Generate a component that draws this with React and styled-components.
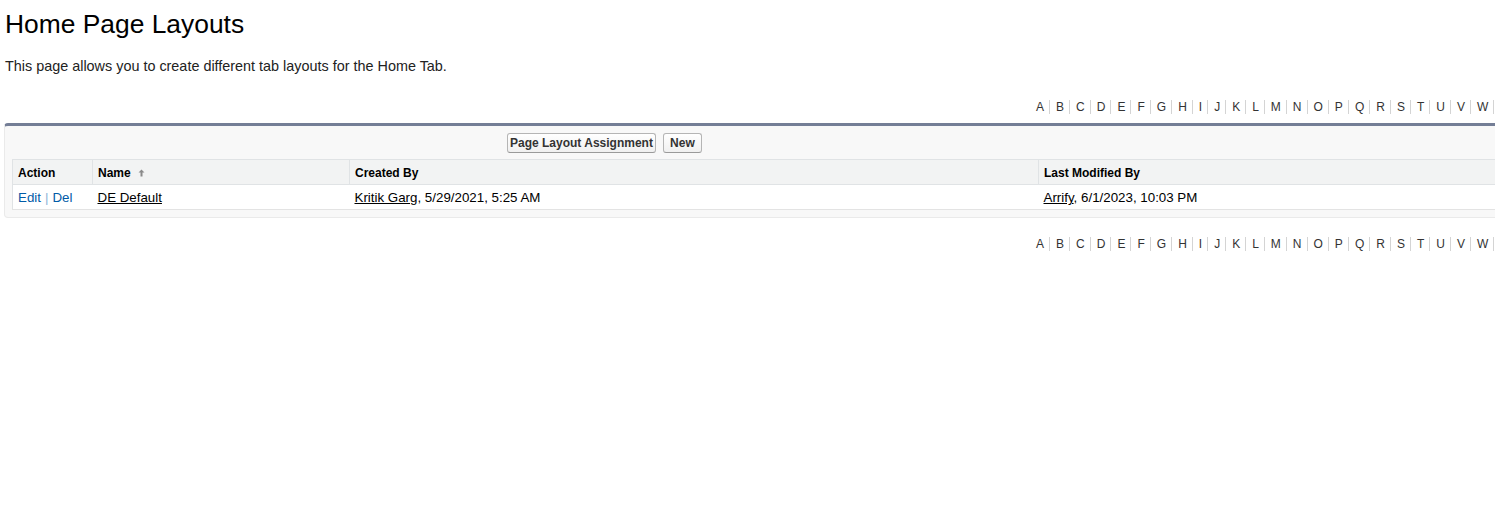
import React from 'react';
import styled, { createGlobalStyle } from 'styled-components';

const GlobalStyle = createGlobalStyle`
  html, body {
    margin: 0;
    padding: 0;
    overflow: hidden;
    background: #fff;
  }
  body {
    font-family: "Liberation Sans", Arial, sans-serif;
    color: #000;
  }
`;

const Page = styled.div`
  width: 1618px;
  padding: 9px 0 0 4px;
`;

const Title = styled.h1`
  margin: 0 0 0 1px;
  font-size: 26.4px;
  line-height: 31px;
  font-weight: normal;
  color: #000;
`;

const Description = styled.p`
  margin: 18px 0 0 1px;
  font-size: 14.4px;
  line-height: 17px;
  color: #222;
`;

const Rolodex = styled.div`
  display: flex;
  justify-content: flex-end;
  margin-top: ${(p) => p.$top}px;
  font-size: 12px;
  line-height: 14px;
`;

const Letter = styled.a`
  padding: 0 5px 0 6px;
  color: ${(p) => (p.$current ? '#000' : '#333')};
  font-weight: ${(p) => (p.$current ? 'bold' : 'normal')};
  text-decoration: none;
  & + & {
    border-left: 1px solid #d4d4d4;
  }
`;

const Panel = styled.div`
  margin-top: 9px;
  background: #f8f8f8;
  border: 1px solid #eaeaea;
  border-top: 3px solid #747e96;
  border-radius: 4px;
  padding: 7px 0 7px 7px;
`;

const PanelHeader = styled.div`
  display: flex;
  align-items: center;
`;

const PanelTitle = styled.div`
  width: 495px;
  flex-shrink: 0;
`;

const Buttons = styled.div`
  display: flex;
  gap: 7px;
`;

const Button = styled.button`
  box-sizing: border-box;
  min-width: 39px;
  font-family: "Liberation Sans", Arial, sans-serif;
  font-size: 12px;
  line-height: 14px;
  font-weight: bold;
  color: #333;
  padding: 2px 2px;
  background: linear-gradient(#ffffff, #f0f0f0);
  border: 1px solid #b5b5b5;
  border-bottom-color: #9a9a9a;
  border-radius: 3px;
  cursor: pointer;
`;

const Table = styled.table`
  margin-top: 6px;
  border-collapse: collapse;
  width: 1596px;
  background: #fff;
  border: 1px solid #e0e3e5;
  table-layout: fixed;
`;

const HeadCell = styled.th`
  box-sizing: border-box;
  width: ${(p) => p.$w || 'auto'};
  text-align: left;
  font-size: 12px;
  line-height: 14px;
  font-weight: bold;
  color: #000;
  background: #f2f3f3;
  padding: 6px 2px 4px 5px;
  border: 1px solid #e0e3e5;
  white-space: nowrap;
`;

const Cell = styled.td`
  font-size: 13.33px;
  line-height: 16px;
  color: #000;
  padding: 5px 2px 3px 5px;
  border-bottom: 1px solid #e3e3e3;
  white-space: nowrap;
`;

const ActionLink = styled.a`
  color: #015ba7;
  text-decoration: none;
`;

const Pipe = styled.span`
  color: #8eb5d8;
  margin: 0 4px;
`;

const UserLink = styled.a`
  color: #000;
  text-decoration: underline;
`;

const SortArrow = () => (
  <svg width="7" height="8" viewBox="0 0 7 8" style={{ marginLeft: 7, verticalAlign: '0px' }}>
    <path d="M3.5 0.5 L6.5 3.5 L4.5 3.5 L4.5 7.5 L2.5 7.5 L2.5 3.5 L0.5 3.5 Z" fill="#8a8a8a" />
  </svg>
);

const letters = 'A B C D E F G H I J K L M N O P Q R S T U V W X Y Z Other All'.split(' ');

const LetterBar = ({ top }) => (
  <Rolodex $top={top}>
    {letters.map((l) => (
      <Letter key={l} $current={l === 'All'}>{l}</Letter>
    ))}
  </Rolodex>
);

const App = () => (
  <>
    <GlobalStyle />
    <Page>
      <Title>Home Page Layouts</Title>
      <Description>This page allows you to create different tab layouts for the Home Tab.</Description>
      <LetterBar top={25} />
      <Panel>
        <PanelHeader>
          <PanelTitle />
          <Buttons>
            <Button>Page Layout Assignment</Button>
            <Button>New</Button>
          </Buttons>
        </PanelHeader>
        <Table>
          <thead>
            <tr>
              <HeadCell $w="80px">Action</HeadCell>
              <HeadCell $w="257px">Name<SortArrow /></HeadCell>
              <HeadCell $w="689px">Created By</HeadCell>
              <HeadCell>Last Modified By</HeadCell>
            </tr>
          </thead>
          <tbody>
            <tr>
              <Cell>
                <ActionLink>Edit</ActionLink>
                <Pipe>|</Pipe>
                <ActionLink>Del</ActionLink>
              </Cell>
              <Cell><UserLink>DE Default</UserLink></Cell>
              <Cell><UserLink>Kritik Garg</UserLink>, 5/29/2021, 5:25 AM</Cell>
              <Cell><UserLink>Arrify</UserLink>, 6/1/2023, 10:03 PM</Cell>
            </tr>
          </tbody>
        </Table>
      </Panel>
      <LetterBar top={19} />
    </Page>
  </>
);

export default App;
